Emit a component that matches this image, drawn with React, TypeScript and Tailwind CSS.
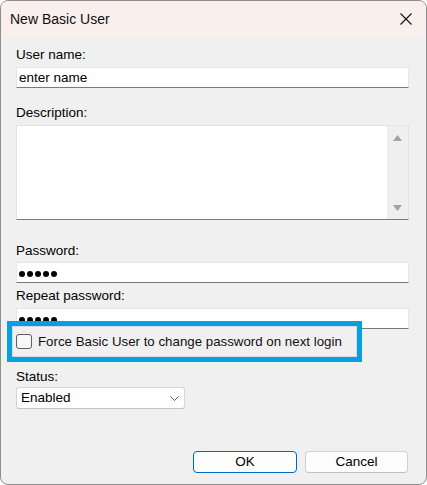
import React from "react";

function Dots() {
  return (
    <div className="flex items-center gap-[2px] pl-[2px] pt-[2px]">
      {[0, 1, 2, 3, 4].map((i) => (
        <span key={i} className="block w-[6px] h-[6px] rounded-full bg-black" />
      ))}
    </div>
  );
}

export default function App() {
  return (
    <div className="w-[427px] h-[485px] bg-white">
      <div className="w-[427px] h-[485px] flex flex-col border border-[#8e8e8e] rounded-[8px] overflow-hidden bg-[#f0f0f0] font-['Liberation_Sans',Arial,sans-serif] text-[13.5px] text-black">
        {/* Title bar */}
        <div className="h-[36px] shrink-0 bg-[#f9efec] flex items-center justify-between pl-[9px] pr-[14px]">
          <span className="text-[14px] leading-[18px] text-[#111]">New Basic User</span>
          <svg width="12" height="12" viewBox="0 0 12 12" className="block">
            <path d="M0.5 0.5 L11.5 11.5 M11.5 0.5 L0.5 11.5" stroke="#111" strokeWidth="1.1" fill="none" />
          </svg>
        </div>

        {/* Body */}
        <div className="flex-1 flex flex-col pl-[15px] pr-[17px]">
          <div className="mt-[10px] leading-[16px]">User name:</div>
          <div className="mt-[4px] h-[21px] bg-white border border-[#e6e6e6] border-b-[#7a7a7a] flex items-center pl-[2px] leading-[16px]">
            enter name
          </div>

          <div className="mt-[17px] leading-[16px]">Description:</div>
          <div className="mt-[4px] h-[95px] bg-white border border-[#e3e3e3] border-b-[#7a7a7a] flex justify-end">
            <div className="w-[21px] h-full bg-[#efefef] flex flex-col items-center justify-between pt-[9px] pb-[8px]">
              <svg width="9" height="6" viewBox="0 0 9 6" className="block">
                <path d="M4.5 0 L9 6 L0 6 Z" fill="#a3a3a3" />
              </svg>
              <svg width="9" height="6" viewBox="0 0 9 6" className="block">
                <path d="M0 0 L9 0 L4.5 6 Z" fill="#a3a3a3" />
              </svg>
            </div>
          </div>

          <div className="mt-[23px] leading-[16px]">Password:</div>
          <div className="mt-[3px] h-[21px] bg-white border border-[#e6e6e6] border-b-[#7a7a7a] flex items-center">
            <Dots />
          </div>

          <div className="mt-[5px] leading-[16px]">Repeat password:</div>
          <div className="mt-[4px] h-[21px] bg-white border border-[#e6e6e6] border-b-[#7a7a7a] flex items-center">
            <Dots />
          </div>

          <div className="relative z-10 -mt-[3px] ml-[-4px] w-[345px] h-[31px] shrink-0 bg-[#f0f0f0] border border-[#dadada] outline-[5px] outline-solid outline-[#06a0dc] flex items-center pl-[3px]">
            <span className="block w-[16px] h-[15px] rounded-[3px] border border-[#5d5d5d] bg-[#f7f7f7]" />
            <span className="ml-[6px] leading-[16px] text-[13.3px] text-[#111]">Force Basic User to change password on next login</span>
          </div>

          <div className="mt-[12px] leading-[16px]">Status:</div>
          <div className="mt-[2px] h-[22px] w-[169px] bg-white border border-[#d6d6d6] border-b-[#c4c4c4] rounded-[3px] flex items-center justify-between pl-[4px] pr-[5px]">
            <span className="leading-[16px]">Enabled</span>
            <svg width="9" height="5" viewBox="0 0 9 5" className="block">
              <path d="M0.5 0.5 L4.5 4.5 L8.5 0.5" stroke="#5a5a5a" strokeWidth="1" fill="none" />
            </svg>
          </div>

          <div className="mt-auto mb-[11px] flex justify-end gap-[8px] pr-[1px]">
            <div className="w-[104px] h-[22px] bg-[#fdfdfd] border border-[#0067c0] rounded-[4px] flex items-center justify-center leading-[16px]">
              OK
            </div>
            <div className="w-[103px] h-[22px] bg-[#fdfdfd] border border-[#d0d0d0] border-b-[#c0c0c0] rounded-[4px] flex items-center justify-center leading-[16px]">
              Cancel
            </div>
          </div>
        </div>
      </div>
    </div>
  );
}
